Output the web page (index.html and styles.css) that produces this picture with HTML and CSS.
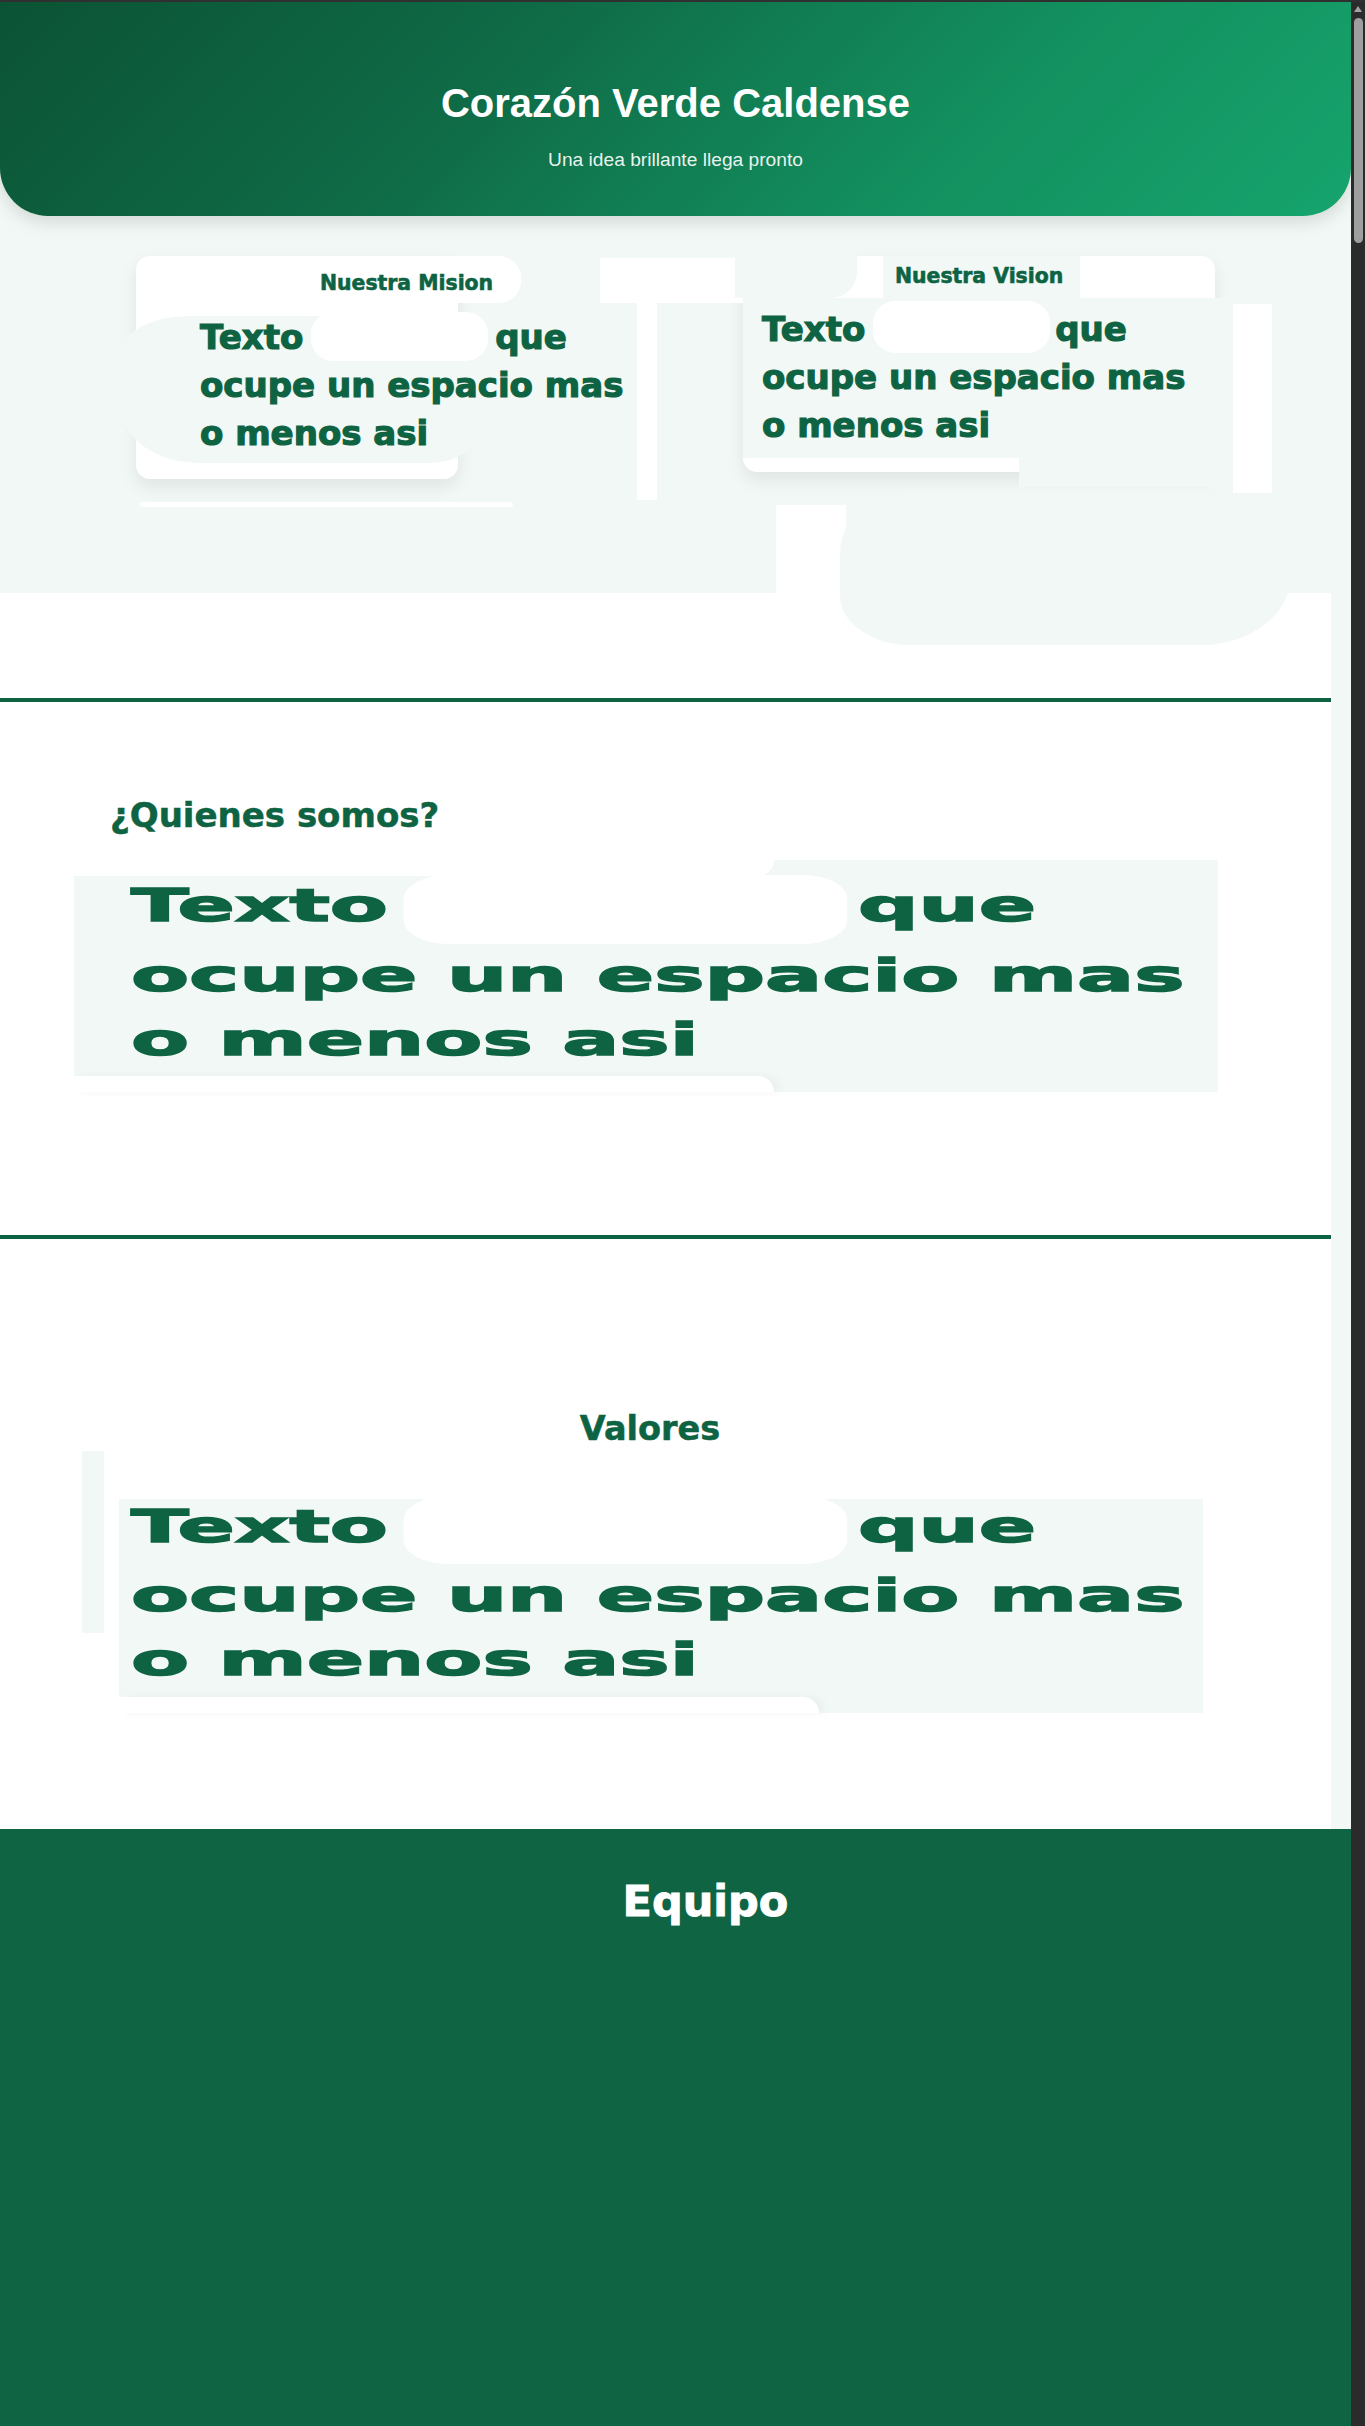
FILE: index.html
```html
<!DOCTYPE html>
<html lang="es">
<head>
<meta charset="utf-8">
<title>Corazón Verde Caldense</title>
<link rel="stylesheet" href="styles.css">
</head>
<body>
<main class="page">
  <div class="top">
    <header class="hero">
      <h1 class="hero-title">Corazón Verde Caldense</h1>
      <p class="hero-sub">Una idea brillante llega pronto</p>
    </header>
    <section class="mv">
      <div class="blob blob-a"></div>
      <div class="blob blob-b"></div>
      <div class="blob blob-c"></div>
      <div class="blob blob-d"></div>
      <div class="blob blob-e"></div>
      <div class="blob blob-f"></div>
      <div class="blob blob-g"></div>
      <div class="blob blob-g2"></div>
      <div class="blob blob-h"></div>
      <div class="blob blob-j"></div>
      <div class="blob blob-k"></div>
      <div class="blob blob-i"></div>
      <div class="mv-row">
        <article class="card card-mision">
          <h3 class="card-title">Nuestra Mision</h3>
          <p class="card-text">Texto<span class="pill pill-m"></span>que<br>ocupe un espacio mas<br>o menos asi</p>
        </article>
        <article class="card card-vision">
          <h3 class="card-title">Nuestra Vision</h3>
          <p class="card-text">Texto<span class="pill pill-v"></span>que<br>ocupe un espacio mas<br>o menos asi</p>
        </article>
      </div>
    </section>
  </div>

  <section class="block quienes">
    <div class="divider"></div>
    <h2 class="block-title">¿Quienes somos?</h2>
    <div class="panel panel-q">
      <p class="big-text">Texto<span class="pill pill-lg"></span>que<br>ocupe un espacio mas<br>o menos asi</p>
    </div>
  </section>

  <section class="block valores">
    <div class="divider divider-2"></div>
    <div class="strip-v"></div>
    <h2 class="block-title centered">Valores</h2>
    <div class="panel panel-v">
      <p class="big-text">Texto<span class="pill pill-lg pill-lg2"></span>que<br>ocupe un espacio mas<br>o menos asi</p>
    </div>
  </section>

  <footer class="equipo">
    <h2 class="equipo-title">Equipo</h2>
  </footer>

  <div class="side-strip"></div>
</main>
<aside class="scrollbar">
  <span class="sb-arrow"></span>
  <span class="sb-thumb"></span>
</aside>
</body>
</html>
```

FILE: styles.css
```css
* { box-sizing: border-box; }

html, body { margin: 0; padding: 0; }

body {
  display: flex;
  align-items: stretch;
  min-height: 2426px;
  border-top: 2px solid #303030;
  background: #ffffff;
  font-family: "Liberation Sans", Arial, sans-serif;
  color: #0e6343;
  overflow-x: hidden;
}

.page {
  position: relative;
  flex: 1;
  min-width: 0;
  background: #ffffff;
}

/* heavy display face (Arial Black look-alike) */
.card-title,
.card-text,
.block-title,
.big-text,
.equipo-title {
  font-family: "DejaVu Sans", "Liberation Sans", sans-serif;
  font-weight: 700;
}

/* ---------- Top area ---------- */
.top {
  background: #f2f8f5;
}

.hero {
  height: 214px;
  padding-top: 77px;
  border-radius: 0 0 48px 48px;
  background: linear-gradient(135deg, #0b5334 0%, #0f6a46 35%, #13905f 70%, #16a46d 100%);
  box-shadow: 0 6px 18px rgba(0, 0, 0, 0.13);
  text-align: center;
  color: #ffffff;
}

.hero-title {
  margin: 0;
  font-size: 40px;
  line-height: 48px;
  font-weight: 700;
}

.hero-sub {
  margin: 19.5px 0 0;
  font-size: 19.2px;
  line-height: 25px;
  color: rgba(255, 255, 255, 0.93);
}

/* ---------- Mission / Vision ---------- */
.mv {
  position: relative;
  height: 377px;
}

.mv-row {
  display: flex;
  align-items: flex-start;
  padding: 40px 0 0 136px;
}

.card {
  background: #ffffff;
  border-radius: 14px;
  box-shadow: 0 8px 18px rgba(0, 0, 0, 0.08);
}

.card-mision {
  width: 322px;
  height: 223px;
  padding: 15px 0 0 64px;
}

.card-vision {
  width: 472px;
  height: 216px;
  margin-left: 285px;
  padding: 8px 0 0 19px;
}

.card-title {
  position: relative;
  z-index: 1;
  margin: 0;
  font-size: 20.4px;
  line-height: 25px;
  -webkit-text-stroke: 0.6px currentColor;
  white-space: nowrap;
  color: #0e6343;
}

.card-mision .card-title { padding-left: 120px; }
.card-vision .card-title { padding-left: 133px; }

.card-text {
  position: relative;
  z-index: 1;
  margin: 16.5px 0 0;
  font-size: 34px;
  line-height: 48px;
  -webkit-text-stroke: 1.2px currentColor;
  white-space: nowrap;
  color: #0e6343;
}

.card-vision .card-text { margin-top: 15.9px; }

.pill {
  display: inline-block;
  background: #ffffff;
  border-radius: 22px;
}

.pill-m {
  width: 177px;
  height: 49px;
  margin: -2px 7px 0 8px;
  vertical-align: -12px;
}

.pill-v {
  width: 177px;
  height: 52px;
  margin: -5px 5px 0 8px;
  vertical-align: -12px;
}

/* decorative patches over the mission / vision area */
.blob { position: absolute; z-index: 0; }
.blob-a { left: 119px; top: 100px; width: 370px; height: 147px; background: #f2f8f5; border-radius: 70px 60px 60px 80px / 40px 60px 50px 60px; }
.blob-b { left: 440px; top: 40px; width: 81px; height: 47px; background: #ffffff; border-radius: 0 22px 22px 0; }
.blob-c { left: 600px; top: 42px; width: 197px; height: 45px; background: #ffffff; }
.blob-d { left: 637px; top: 87px; width: 20px; height: 197px; background: #ffffff; }
.blob-e { left: 883px; top: 40px; width: 197px; height: 42px; background: #f2f8f5; }
.blob-f { left: 735px; top: 36px; width: 122px; height: 46px; background: #f2f8f5; border-radius: 0 0 26px 0; }
.blob-g { left: 743px; top: 82px; width: 490px; height: 160px; background: #f2f8f5; }
.blob-g2 { left: 1019px; top: 224px; width: 214px; height: 47px; background: #f2f8f5; }
.blob-h { left: 1233px; top: 88px; width: 39px; height: 189px; background: #ffffff; }
.blob-j { left: 140px; top: 286px; width: 373px; height: 5px; background: #ffffff; border-radius: 3px; }
.blob-k { left: 776px; top: 289px; width: 70px; height: 88px; background: #ffffff; }
.blob-i { left: 840px; top: 277px; width: 451px; height: 152px; background: #f2f8f5; border-radius: 70px 40px 90px 70px / 60px 40px 70px 50px; }

/* ---------- Content blocks ---------- */
.block { position: relative; }

.quienes { padding-top: 105px; }

.divider {
  height: 4px;
  background: #0e6343;
}

.divider-2 { margin-top: 143px; }

.block-title {
  margin: 94.2px 0 0 110px;
  font-size: 34px;
  line-height: 38px;
  -webkit-text-stroke: 0.5px currentColor;
  color: #0e6343;
  white-space: nowrap;
}

.block-title.centered {
  margin: 170.8px 0 0;
  padding-right: 51px;
  font-size: 33.5px;
  text-align: center;
}

.panel {
  position: relative;
  display: flow-root;
  background: #f2f8f5;
}

.panel-q {
  width: 1144px;
  height: 232px;
  margin: 25.8px 0 0 74px;
  padding: 14.4px 0 0 56.5px;
}

.panel-v {
  width: 1084px;
  height: 214px;
  margin: 51.2px 0 0 119px;
  padding: 0 0 0 11.5px;
}

.panel-v .big-text { margin-top: -3.5px; }

.panel::before {
  content: "";
  position: absolute;
  left: 0;
  top: 0;
  width: 700px;
  height: 16px;
  background: #ffffff;
  border-radius: 0 0 40px 0;
}

.panel::after {
  content: "";
  position: absolute;
  left: 0;
  bottom: 0;
  width: 700px;
  height: 16px;
  background: #ffffff;
  border-radius: 0 40px 0 0;
  box-shadow: 6px 0 10px rgba(0, 0, 0, 0.04);
}

.panel-v::before { display: none; }

.big-text {
  position: relative;
  z-index: 1;
  width: max-content;
  margin: 0;
  font-size: 45px;
  line-height: 64px;
  -webkit-text-stroke: 1.4px currentColor;
  white-space: nowrap;
  transform: scaleX(1.88);
  transform-origin: 0 0;
  color: #0e6343;
}

.pill-lg {
  width: 236px;
  height: 69px;
  margin: 0 6px 0 8px;
  border-radius: 24px;
  vertical-align: -23px;
}

.pill-lg2 { height: 68px; vertical-align: -22px; }

.strip-v {
  position: absolute;
  left: 82px;
  top: 216px;
  width: 22px;
  height: 182px;
  background: #f2f8f5;
}

/* ---------- Footer ---------- */
.equipo {
  margin-top: 116px;
  height: 597px;
  padding: 46px 0 0 60px;
  background: #0f6443;
  text-align: center;
}

.equipo-title {
  margin: 0;
  font-size: 43px;
  line-height: 52px;
  -webkit-text-stroke: 0.9px currentColor;
  color: #ffffff;
}

.side-strip {
  position: absolute;
  right: 0;
  top: 591px;
  width: 20px;
  height: 1236px;
  background: #f2f8f5;
}

/* ---------- Scrollbar ---------- */
.scrollbar {
  position: relative;
  flex: 0 0 14px;
  width: 14px;
  background: #2b2b2b;
}

.sb-arrow {
  position: absolute;
  left: 3px;
  top: 4px;
  width: 0;
  height: 0;
  border-left: 4px solid transparent;
  border-right: 4px solid transparent;
  border-bottom: 6px solid #a3a3a3;
}

.sb-thumb {
  position: absolute;
  left: 3px;
  top: 16px;
  width: 9px;
  height: 225px;
  border-radius: 5px;
  background: #9e9e9e;
}
```
